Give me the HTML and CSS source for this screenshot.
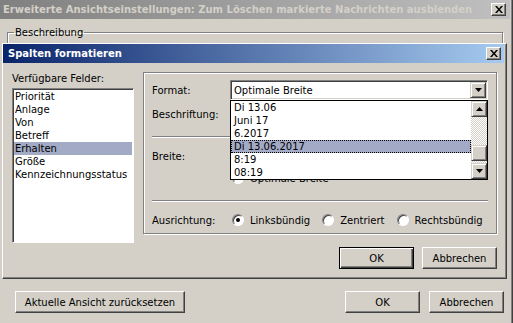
FILE: index.html
```html
<!DOCTYPE html>
<html lang="de">
<head>
	<meta charset="UTF-8">
	<meta name="viewport" content="width=device-width, initial-scale=1.0">
	<title>Spalten formatieren</title>
	<link rel="stylesheet" href="styles.css">
</head>
<body>
	<div class="window">
		<div class="titlebar inactive">
			<span class="caption">Erweiterte Ansichtseinstellungen: Zum Löschen markierte Nachrichten ausblenden</span>
			<button class="close-btn"><svg width="8" height="7" viewBox="0 0 8 7"><path d="M0 0h2l2 2.5L6 0h2L5 3.5 8 7H6L4 4.5 2 7H0l3-3.5z"/></svg></button>
		</div>
		<fieldset class="desc">
			<legend>Beschreibung</legend>
		</fieldset>
		<div class="footer">
			<button class="btn wide">Aktuelle Ansicht zurücksetzen</button>
			<div class="btn-group">
				<button class="btn">OK</button>
				<button class="btn">Abbrechen</button>
			</div>
		</div>

		<!-- Spalten formatieren dialog, floating over the outer window -->
		<div class="dialog">
			<div class="titlebar active">
				<span class="caption">Spalten formatieren</span>
				<button class="close-btn"><svg width="8" height="7" viewBox="0 0 8 7"><path d="M0 0h2l2 2.5L6 0h2L5 3.5 8 7H6L4 4.5 2 7H0l3-3.5z"/></svg></button>
			</div>
			<div class="dialog-body">
				<div class="fields">
					<div class="field-label">Verfügbare Felder:</div>
					<ul class="listbox">
						<li>Priorität</li>
						<li>Anlage</li>
						<li>Von</li>
						<li>Betreff</li>
						<li class="selected">Erhalten</li>
						<li>Größe</li>
						<li>Kennzeichnungsstatus</li>
					</ul>
				</div>
				<div class="format-box">
					<div class="row">
						<span class="row-label">Format:</span>
						<div class="combo">
							<span>Optimale Breite</span>
							<span class="combo-btn"><svg width="7" height="4" viewBox="0 0 7 4"><path d="M0 0h7L3.5 4z"/></svg></span>
						</div>
					</div>
					<div class="row row-caption">
						<span class="row-label">Beschriftung:</span>
					</div>
					<div class="sep sep-top"></div>
					<div class="row row-width">
						<span class="row-label">Breite:</span>
					</div>
					<div class="row row-fit">
						<span class="row-label"></span>
						<label class="opt"><span class="radio"></span>Optimale Breite</label>
					</div>
					<div class="sep sep-bottom"></div>
					<div class="row row-align">
						<span class="row-label">Ausrichtung:</span>
						<div class="opts">
							<label class="opt"><span class="radio checked"></span>Linksbündig</label>
							<label class="opt"><span class="radio"></span>Zentriert</label>
							<label class="opt"><span class="radio"></span>Rechtsbündig</label>
						</div>
					</div>

					<!-- open list of the Format combo -->
					<div class="dropdown">
						<ul class="dd-items">
							<li>Di 13.06</li>
							<li>Juni 17</li>
							<li>6.2017</li>
							<li class="selected">Di 13.06.2017</li>
							<li>8:19</li>
							<li>08:19</li>
						</ul>
						<div class="scrollbar">
							<span class="sb-btn"><svg width="7" height="4" viewBox="0 0 7 4"><path d="M0 4h7L3.5 0z"/></svg></span>
							<span class="sb-track"></span>
							<span class="sb-thumb"></span>
							<span class="sb-track small"></span>
							<span class="sb-btn"><svg width="7" height="4" viewBox="0 0 7 4"><path d="M0 0h7L3.5 4z"/></svg></span>
						</div>
					</div>
				</div>
				<div class="dialog-buttons">
					<button class="btn default">OK</button>
					<button class="btn">Abbrechen</button>
				</div>
			</div>
		</div>
	</div>
</body>
</html>
```
FILE: styles.css
```css
* {
	box-sizing: border-box;
}
body {
	margin: 0;
	width: 513px;
	height: 323px;
	overflow: hidden;
	background-color: #d4d0c8;
	font-family: "DejaVu Sans", Tahoma, sans-serif;
	font-size: 10px;
	color: #000;
}
.window {
	position: relative;
	display: flex;
	flex-direction: column;
	height: 323px;
	border-right: 1px solid #404040;
	box-shadow: inset -1px 0 #808080;
}
.titlebar {
	display: flex;
	align-items: center;
	justify-content: space-between;
	height: 19px;
	font-weight: bold;
	white-space: nowrap;
}
.titlebar.inactive {
	margin-right: 2px;
	padding: 0 4px 0 3px;
	background: linear-gradient(to right, #808080, #c0c0c0);
	color: #d4d0c8;
}
.titlebar.active {
	margin-right: 2px;
	padding: 0 3px 0 5px;
	background: linear-gradient(to right, #0a246a, #a6caf0);
	color: #fff;
}
.close-btn {
	display: flex;
	align-items: center;
	justify-content: center;
	width: 15px;
	height: 13px;
	padding: 0;
	background-color: #d4d0c8;
	border: 1px solid;
	border-color: #fff #404040 #404040 #fff;
	box-shadow: inset -1px -1px #808080;
}
.desc {
	height: 200px;
	min-width: 0;
	margin: 7px 9px 0 7px;
	padding: 0;
	border: 1px solid #808080;
	box-shadow: 1px 1px #fff, inset 1px 1px #fff;
}
.desc legend {
	margin-left: 6px;
	padding: 0 1px;
	line-height: 13px;
}
.footer {
	display: flex;
	justify-content: space-between;
	margin-top: auto;
	padding: 0 8px 10px 15px;
}
.btn-group {
	display: flex;
	gap: 9px;
}
.btn {
	width: 75px;
	height: 22px;
	padding: 0;
	font: inherit;
	color: #000;
	background-color: #d4d0c8;
	border: 1px solid;
	border-color: #fff #404040 #404040 #fff;
	box-shadow: inset -1px -1px #808080;
}
.btn.wide {
	width: 170px;
}
.btn.default {
	border-color: #000;
	box-shadow: inset 1px 1px #fff, inset -1px -1px #404040, inset -2px -2px #808080;
}

/* inner dialog */
.dialog {
	position: absolute;
	left: 2px;
	top: 43px;
	width: 505px;
	height: 236px;
	background-color: #d4d0c8;
	border: 1px solid;
	border-color: #fff #404040 #404040 #fff;
	box-shadow: inset -1px -1px #808080;
}
.dialog-body {
	display: grid;
	grid-template-columns: 122px 354px;
	column-gap: 9px;
	align-items: start;
	padding: 9px;
}
.dialog-buttons {
	grid-column: 1 / -1;
	display: flex;
	justify-content: flex-end;
	gap: 8px;
	margin-top: 4px;
}
.field-label {
	line-height: 13px;
}
.listbox {
	height: 155px;
	margin: 3px 0 0;
	padding: 1px 1px 0;
	list-style: none;
	background-color: #fff;
	border: 1px solid;
	border-color: #808080 #fff #fff #808080;
	box-shadow: inset 1px 1px #404040;
}
.listbox li {
	height: 13px;
	line-height: 13px;
	padding-left: 1px;
}
.selected {
	background-color: #a3aac6;
}
.format-box {
	position: relative;
	height: 162px;
	padding: 7px 8px 3px;
	border: 1px solid #808080;
	box-shadow: inset 1px 1px #fff, 1px 1px #fff;
}
.row {
	display: flex;
	align-items: center;
	height: 20px;
}
.row-label {
	flex: none;
	width: 78px;
}
.row-caption {
	margin-top: 4px;
}
.row-width {
	margin-top: 8px;
}
.row-fit {
	height: 14px;
	margin-top: 5px;
}
.row-fit .opt {
	margin-left: 2px;
}
.row-align {
	margin-top: 8px;
}
.sep {
	border-top: 1px solid #808080;
	border-bottom: 1px solid #fff;
}
.sep-top {
	margin-top: 12px;
}
.sep-bottom {
	margin-top: 15px;
}
.combo {
	display: flex;
	align-items: center;
	flex: 1;
	height: 20px;
	padding: 0 0 0 3px;
	background-color: #fff;
	border: 1px solid;
	border-color: #808080 #fff #fff #808080;
	box-shadow: inset 1px 1px #404040, inset -1px -1px #d4d0c8;
}
.combo-btn,
.sb-btn,
.sb-thumb {
	display: flex;
	align-items: center;
	justify-content: center;
	width: 16px;
	height: 16px;
	background-color: #d4d0c8;
	border: 1px solid;
	border-color: #d4d0c8 #404040 #404040 #d4d0c8;
	box-shadow: inset 1px 1px #fff, inset -1px -1px #808080;
}
.combo-btn {
	margin-left: auto;
	margin-right: 1px;
}
.opts {
	display: flex;
	gap: 12px;
	margin-left: 2px;
}
.opt {
	display: flex;
	align-items: center;
	gap: 6px;
}
.radio {
	position: relative;
	flex: none;
	width: 12px;
	height: 12px;
	border-radius: 50%;
	background-color: #fff;
	border: 1px solid;
	border-color: #808080 #fff #fff #808080;
	box-shadow: inset 1px 1px #404040;
}
.radio.checked::after {
	content: "";
	position: absolute;
	left: 3px;
	top: 3px;
	width: 4px;
	height: 4px;
	border-radius: 50%;
	background-color: #000;
}

/* open combo list */
.dropdown {
	position: absolute;
	left: 86px;
	top: 27px;
	display: flex;
	width: 258px;
	height: 80px;
	background-color: #fff;
	border: 1px solid #000;
}
.dd-items {
	flex: 1;
	margin: 0;
	padding: 0;
	list-style: none;
}
.dd-items li {
	height: 13px;
	line-height: 13px;
	padding-left: 3px;
}
.dd-items .selected {
	outline: 1px dotted #000;
	outline-offset: -1px;
}
.scrollbar {
	display: flex;
	flex-direction: column;
	width: 16px;
}
.sb-track {
	height: 28px;
	background: repeating-conic-gradient(#d4d0c8 0 25%, #fff 0 50%) 0 0 / 2px 2px;
}
.sb-track.small {
	height: 2px;
}
```
